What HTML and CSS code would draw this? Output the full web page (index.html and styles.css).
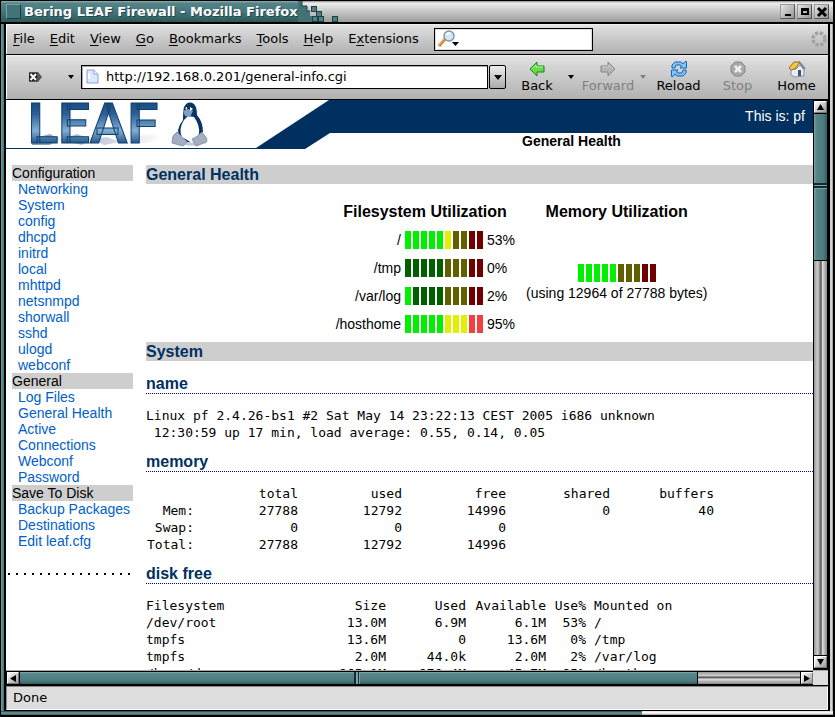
FILE: index.html
```html
<!DOCTYPE html>
<html lang="en">
<head>
<meta charset="utf-8">
<title>Bering LEAF Firewall - Mozilla Firefox</title>
<link rel="stylesheet" href="styles.css">
</head>
<body>
<div class="window">
  <div class="titlebar">
    <div class="title-tab"><span class="sysbox"></span><span class="title">Bering LEAF Firewall - Mozilla Firefox</span></div>
    <svg class="ragged" width="44" height="21" viewBox="0 0 44 21" aria-hidden="true">
      <path d="M0 0H4V5H9V10H12V15H17V21H0Z" fill="#427276"/>
      <path d="M4 0V5H9V10H12" fill="none" stroke="#203f43"/>
      <g fill="#4d8185" stroke="#203f43">
        <rect x="13.500" y="5.500" width="5" height="5"/><rect x="18.500" y="10.500" width="5" height="5"/>
        <rect x="14.500" y="15.500" width="5" height="5"/><rect x="20.500" y="15.500" width="5" height="5"/><rect x="34.500" y="15.500" width="5" height="5"/>
      </g>
    </svg>
    <div class="win-buttons">
      <button aria-label="Minimize"><svg width="12" height="12" viewBox="0 0 12 12"><path d="M3 8H9V10H3Z"/></svg></button>
      <button aria-label="Maximize"><svg width="12" height="12" viewBox="0 0 12 12"><path fill-rule="evenodd" d="M2 2H10V9H2ZM4 5V7H8V5Z"/></svg></button>
      <button aria-label="Close"><svg width="12" height="12" viewBox="0 0 12 12"><path d="M2 2L10 10M10 2L2 10" stroke="#000" stroke-width="3"/></svg></button>
    </div>
  </div>
  <div class="frame">
    <div class="inside">
      <div class="menubar">
        <nav class="menus">
          <button><u>F</u>ile</button><button><u>E</u>dit</button><button><u>V</u>iew</button><button><u>G</u>o</button><button><u>B</u>ookmarks</button><button><u>T</u>ools</button><button><u>H</u>elp</button><button>E<u>x</u>tensions</button>
        </nav>
        <div class="search">
          <svg width="22" height="18" viewBox="0 0 22 18" aria-hidden="true">
            <path d="M1 16L7 9" stroke="#d77f2a" stroke-width="3"/><path d="M1 15L6 9" stroke="#ffc27a"/>
            <circle cx="11" cy="6" r="5" fill="#cfe8fa" stroke="#8793a5" stroke-width="1.500"/>
            <path d="M8 5Q9 3 12 3" stroke="#fff" stroke-width="2" fill="none"/>
            <path d="M14 12H21L17.500 16Z"/>
          </svg>
          <input type="text" aria-label="Search">
        </div>
        <svg class="throbber" width="16" height="16" viewBox="0 0 16 16" aria-hidden="true">
          <circle cx="8" cy="8" r="6" fill="none" stroke="#a2a2a2" stroke-width="3.500" stroke-dasharray="3.200 1.512"/>
        </svg>
      </div>
      <div class="toolbar">
        <button class="go" aria-label="Clear location"><svg width="14" height="10" viewBox="0 0 14 10"><path d="M0 0H9L13 5L9 10H0Z" fill="#555"/><path d="M0 1H8V9H0Z" fill="#222"/><path d="M1.500 2L7 8M7 2L1.500 8" stroke="#fff" stroke-width="2"/></svg></button>
        <button class="caret first" aria-label="Location options"><svg width="6" height="4" viewBox="0 0 6 4"><path d="M0 0H6L3 4Z"/></svg></button>
        <div class="address">
          <svg width="13" height="16" viewBox="0 0 13 16" aria-hidden="true"><path d="M1 1H8L12 5V14H1Z" fill="#dbe8fb" stroke="#88a0d8"/><path d="M8 1V5H12" fill="#fff" stroke="#88a0d8"/><path d="M3 4V10" stroke="#fff" stroke-width="2"/></svg>
          <input type="text" aria-label="Address" value="http://192.168.0.201/general-info.cgi">
        </div>
        <button class="drop" aria-label="History"><svg width="8" height="5" viewBox="0 0 8 5"><path d="M0 0H8L4 5Z"/></svg></button>
        <button class="tool back"><svg width="18" height="18" viewBox="0 0 18 18"><path d="M2 9L9 2V6H16V12H9V16Z" fill="#68d84f" stroke="#178a16"/><path d="M4 9L8 5V7H15" fill="none" stroke="#b9f5a5"/></svg>Back</button>
        <button class="caret back-caret" aria-label="Back list"><svg width="6" height="4" viewBox="0 0 6 4"><path d="M0 0H6L3 4Z"/></svg></button>
        <button class="tool forward" disabled><svg width="18" height="18" viewBox="0 0 18 18"><path d="M16 9L9 2V6H2V12H9V16Z" fill="#b5b5b5" stroke="#868686"/><path d="M3 7H10V5L14 9" fill="none" stroke="#ccc"/></svg>Forward</button>
        <button class="caret forward-caret" aria-label="Forward list" disabled><svg width="6" height="4" viewBox="0 0 6 4"><path d="M0 0H6L3 4Z" fill="#808080"/></svg></button>
        <button class="tool"><svg width="18" height="18" viewBox="0 0 18 18"><g fill="#7fc6fb" stroke="#1763bd"><path d="M2 8V5L5 2H11L13 4L15 1.500H16.500V8H10L11.500 6L10 5H6L5 8Z"/><path d="M16 10V13L13 16H7L5 14L3 16.500H1.500V10H8L6.500 12L8 13H12L13 10Z"/></g></svg>Reload</button>
        <button class="tool" disabled><svg width="18" height="18" viewBox="0 0 18 18"><path d="M6 2H12L16 6V12L12 16H6L2 12V6Z" fill="#aaa" stroke="#858585"/><path d="M6 6L12 12M12 6L6 12" stroke="#f0f0f0" stroke-width="2.500"/></svg>Stop</button>
        <button class="tool"><svg width="18" height="18" viewBox="0 0 18 18"><path d="M3 9H8L12 5L16 10V16L7 17L3 15Z" fill="#e8edf5" stroke="#8591a5"/><path d="M1 8L6 2H12L7 9L3 10Z" fill="#f5c745" stroke="#9a6b10"/><path d="M11 2L17 9" stroke="#7e8490" stroke-width="2"/><path d="M10 10H13V16H10Z" fill="#44566f"/></svg>Home</button>
      </div>
      <div class="viewport">
        <div class="page">
          <header class="banner">
            <svg class="logo" width="324" height="49" viewBox="6 100 324 49" role="img" aria-label="LEAF">
              <defs><linearGradient id="steel" x1="0" y1="0" x2="0" y2="1"><stop offset="0" stop-color="#063a6c"/><stop offset=".35" stop-color="#2c6095"/><stop offset=".6" stop-color="#83aed4"/><stop offset=".78" stop-color="#285b8f"/><stop offset="1" stop-color="#043664"/></linearGradient>
              <linearGradient id="shade"><stop offset="0" stop-color="#8797b4"/><stop offset="1" stop-color="#fff"/></linearGradient></defs>
              <path d="M31 139L50 134L59 139L50 145H32ZM60 140L77 134L91 139L82 145ZM92 139L107 137L121 142L104 145ZM132 138L151 134L163 137L148 143H134Z" fill="url(#shade)"/>
              <text class="leaf" x="28" y="143">LEAF</text>
              <path d="M177 143Q193 149 208 142L202 136H180Z" fill="#c3cad8"/>
              <path d="M180 138Q175 130 183 120Q183 111 184 107Q188 100 194 104Q197 107 197 115Q203 122 203 132L199 142H183Z" fill="#063563"/>
              <path d="M184 120L188 116L194 117Q200 125 199 134L192 143L182 137Q178 130 184 120Z" fill="#fff"/>
              <path d="M183 111L188 109L193 111L190 117L185 116Z" fill="#7aa0c5"/>
              <path d="M185 108L187 107V110ZM190 107L193 109L190 111Z" fill="#fff"/>
              <path d="M173 136L177 132L182 137L187 142L183 146L172 143ZM192 139L198 136L202 132L207 139L206 142L196 146Z" fill="#a4aec0" stroke="#8895ae"/>
              <path d="M6 148H256L329 100H330V133L305 149H6Z" fill="#003060"/>
            </svg>
            <div class="banner-text"><div class="host">This is: pf</div><div class="crumb">General Health</div></div>
          </header>
          <div class="columns">
            <nav class="side">
              <h4>Configuration</h4>
              <a href="#">Networking</a><a href="#">System</a><a href="#">config</a><a href="#">dhcpd</a><a href="#">initrd</a><a href="#">local</a><a href="#">mhttpd</a><a href="#">netsnmpd</a><a href="#">shorwall</a><a href="#">sshd</a><a href="#">ulogd</a><a href="#">webconf</a>
              <h4>General</h4>
              <a href="#">Log Files</a><a href="#">General Health</a><a href="#">Active</a><a href="#">Connections</a><a href="#">Webconf</a><a href="#">Password</a>
              <h4>Save To Disk</h4>
              <a href="#">Backup Packages</a><a href="#">Destinations</a><a href="#">Edit leaf.cfg</a>
              <hr>
            </nav>
            <main>
              <h2>General Health</h2>
              <div class="usage">
                <table class="fs">
                  <caption>Filesystem Utilization</caption>
                  <tr><th scope="row">/</th><td><span class="bar"><i class="g"></i><i class="g"></i><i class="g"></i><i class="g"></i><i class="g"></i><i class="y"></i><i class="dy"></i><i class="dy"></i><i class="dr"></i><i class="dr"></i></span></td><td>53%</td></tr>
                  <tr><th scope="row">/tmp</th><td><span class="bar"><i class="dg"></i><i class="dg"></i><i class="dg"></i><i class="dg"></i><i class="dg"></i><i class="dy"></i><i class="dy"></i><i class="dy"></i><i class="dr"></i><i class="dr"></i></span></td><td>0%</td></tr>
                  <tr><th scope="row">/var/log</th><td><span class="bar"><i class="g"></i><i class="dg"></i><i class="dg"></i><i class="dg"></i><i class="dg"></i><i class="dy"></i><i class="dy"></i><i class="dy"></i><i class="dr"></i><i class="dr"></i></span></td><td>2%</td></tr>
                  <tr><th scope="row">/hosthome</th><td><span class="bar"><i class="g"></i><i class="g"></i><i class="g"></i><i class="g"></i><i class="g"></i><i class="y"></i><i class="y"></i><i class="y"></i><i class="r"></i><i class="r"></i></span></td><td>95%</td></tr>
                </table>
                <section class="mem">
                  <h5>Memory Utilization</h5>
                  <div class="mem-body"><span class="bar"><i class="g"></i><i class="g"></i><i class="g"></i><i class="g"></i><i class="g"></i><i class="dy"></i><i class="dy"></i><i class="dy"></i><i class="dr"></i><i class="dr"></i></span><span>(using 12964 of 27788 bytes)</span></div>
                </section>
              </div>
              <h2>System</h2>
              <h3>name</h3>
              <pre>Linux pf 2.4.26-bs1 #2 Sat May 14 23:22:13 CEST 2005 i686 unknown
 12:30:59 up 17 min, load average: 0.55, 0.14, 0.05</pre>
              <h3>memory</h3>
              <table class="report memory">
                <tr><td></td><th>total</th><th>used</th><th>free</th><th>shared</th><th>buffers</th></tr>
                <tr><th>Mem:</th><td>27788</td><td>12792</td><td>14996</td><td>0</td><td>40</td></tr>
                <tr><th>Swap:</th><td>0</td><td>0</td><td>0</td><td></td><td></td></tr>
                <tr><th>Total:</th><td>27788</td><td>12792</td><td>14996</td><td></td><td></td></tr>
              </table>
              <h3>disk free</h3>
              <table class="report disk">
                <tr><th>Filesystem</th><th>Size</th><th>Used</th><th>Available</th><th>Use%</th><th>Mounted on</th></tr>
                <tr><td>/dev/root</td><td>13.0M</td><td>6.9M</td><td>6.1M</td><td>53%</td><td>/</td></tr>
                <tr><td>tmpfs</td><td>13.6M</td><td>0</td><td>13.6M</td><td>0%</td><td>/tmp</td></tr>
                <tr><td>tmpfs</td><td>2.0M</td><td>44.0k</td><td>2.0M</td><td>2%</td><td>/var/log</td></tr>
                <tr><td>/home/danes</td><td>965.1M</td><td>870.4M</td><td>45.7M</td><td>95%</td><td>/hosthome</td></tr>
              </table>
            </main>
          </div>
        </div>
        <div class="vscroll">
          <button aria-label="Scroll up"><svg width="7" height="6" viewBox="0 0 7 6"><path d="M0 6L3.500 0L7 6Z"/></svg></button>
          <div class="thumb"></div><div class="trough"></div>
          <button aria-label="Scroll down"><svg width="7" height="6" viewBox="0 0 7 6"><path d="M0 0L3.500 6L7 0Z"/></svg></button>
        </div>
      </div>
      <div class="hscroll">
        <button aria-label="Scroll left"><svg width="6" height="7" viewBox="0 0 6 7"><path d="M6 0L0 3.500L6 7Z"/></svg></button>
        <div class="thumb"></div><div class="trough"></div>
        <button aria-label="Scroll right"><svg width="6" height="7" viewBox="0 0 6 7"><path d="M0 0L6 3.500L0 7Z"/></svg></button>
      </div>
      <div class="status">Done</div>
    </div>
  </div>
  <div class="bottom-edge"><span></span></div>
</div>
</body>
</html>
```
FILE: styles.css
```css
* { box-sizing: border-box; }
body { margin: 0; background: #000; color: #000; font: 13px/16px "DejaVu Sans", sans-serif; }
button { margin: 0; padding: 0; border: 0; background: none; color: inherit; font: inherit; }
svg { display: block; flex: none; }
.window { height: 100vh; padding: 1px 2px 2px 1px; display: flex; flex-direction: column; overflow: hidden; }

.titlebar { height: 21px; flex: none; display: flex; background: linear-gradient(#8a8a8a, #eee 2px, #cfcfcf 40%, #9d9d9d); }
.title-tab { display: flex; align-items: center; gap: 3px; padding-left: 5px; background: linear-gradient(#8fb0b3, #568589 2px, #44767a 50%, #2d585c); }
.sysbox { width: 15px; height: 15px; background: #417377; border: 1px solid #1c3b3e; border-top-color: #75a1a4; border-left-color: #75a1a4; }
.title { color: #fff; font-weight: bold; text-shadow: 1px 1px #24474a; white-space: nowrap; }
.ragged { margin-right: auto; }
.win-buttons { display: flex; gap: 2px; padding: 3px 4px 0 0; }
.win-buttons button { width: 15px; height: 15px; display: grid; place-items: center; background: linear-gradient(135deg, #e4e4e4, #959595); border: 1px solid #555; border-top-color: #999; border-left-color: #999; }

.frame { flex: 1; min-height: 0; display: flex; padding: 2px 0 0 3px; background: linear-gradient(#000, #000) top / 100% 2px no-repeat, linear-gradient(90deg, #6d9b9e, #437578 3px, transparent 3px), linear-gradient(270deg, #8a8a8a, #eee 2px, #aaa 3px, #000 3px); }
.inside { flex: 1; min-width: 0; margin-right: 3px; padding: 0 2px; background: #000; display: flex; flex-direction: column; }
.menubar, .toolbar { flex: none; display: flex; align-items: center; background: linear-gradient(#f4f4f4, #e0e0e0 2px, #c9c9c9 50%, #b1b1b1); border-left: 1px solid #fff; }
.menubar { height: 30px; }
.menus { display: flex; gap: 15px; padding: 0 15px 0 6px; }
.menus u { text-underline-offset: 2px; }
.search { width: 159px; height: 23px; display: flex; align-items: center; padding-left: 3px; background: #fff; border: 1px solid #000; outline: 1px solid #ddd; outline-offset: -2px; }
input { min-width: 0; flex: 1; border: 0; padding: 0; background: none; font: inherit; outline: none; }
.throbber { margin-left: auto; margin-right: 1px; }
.toolbar { height: 44px; margin-top: 1px; padding-right: 2px; }
.go { width: 50px; display: flex; justify-content: center; padding-left: 8px; }
.caret { display: grid; place-items: center; }
.caret.first { width: 24px; padding-left: 4px; padding-right: 1px; }
.address { flex: 1; min-width: 0; height: 24px; display: flex; align-items: center; gap: 7px; padding-left: 4px; background: #fff; border: 1px solid #000; box-shadow: inset 1px 1px #aaa; }
.drop { width: 17px; height: 24px; margin: 0 6px 0 1px; display: grid; place-items: center; border: 1px solid #000; background: linear-gradient(#eee, #aaa); border-radius: 2px; }
.tool { width: 59px; height: 34px; display: flex; flex-direction: column; align-items: center; }
.tool:disabled { color: #808080; }
.tool.back { width: 50px; }
.tool.forward { width: 56px; }
.back-caret { width: 18px; }
.forward-caret { width: 13px; }

.viewport { flex: 1; min-height: 0; margin-top: 1px; display: flex; background: #fff; }
.page { flex: 1; min-width: 0; overflow: hidden; font: 14px/16px "Liberation Sans", sans-serif; }
.banner { display: flex; height: 49px; }
.leaf { font: bold 56px Roboto, sans-serif; fill: url(#steel); stroke: #0d406f; stroke-width: 1px; }
.banner-text { flex: 1; }
.host { height: 33px; padding: 8px 8px 0; text-align: right; color: #fff; background: #003060; }
.crumb { text-align: center; font-weight: bold; }
.columns { display: flex; gap: 13px; padding: 16px 0 0 6px; }
.side { width: 121px; flex: none; }
.side h4 { margin: 0; background: #cecece; font-weight: normal; }
.side a { display: block; padding-left: 6px; color: #0060c8; text-decoration: none; }
.side hr { height: 2px; margin: 24px 0 0 -4px; border: 0; background: repeating-linear-gradient(90deg, #000 0 2px, transparent 2px 8px); }
main { flex: 1; min-width: 0; }
h2, h3, h5, caption { font-size: 16px; font-weight: bold; }
h2 { margin: 0; line-height: 19px; color: #003060; background: #cecece; }
h3 { margin: 12px 0 13px; line-height: 18px; color: #003060; border-bottom: 1px dotted #0000a0; }
h2 + h3 { margin-top: 14px; }
.usage { display: flex; gap: 11px; padding: 13px 0 4px 189px; }
.fs { border-collapse: collapse; }
.fs caption, .mem h5 { margin: 0; height: 29px; line-height: 29px; white-space: nowrap; }
.fs th, .fs td { height: 28px; padding: 0 4px 0 0; font-weight: normal; }
.fs th { width: 70px; text-align: right; }
.fs td:last-child { width: 28px; padding: 0; }
.bar { display: flex; gap: 2px; }
.bar i { width: 6px; height: 18px; }
.g { background: #00f000; } .dg { background: #006000; } .y { background: #e0f000; } .dy { background: #606000; } .r { background: #f04040; } .dr { background: #700000; }
.mem { display: flex; flex-direction: column; text-align: center; }
.mem-body { flex: 1; display: flex; flex-direction: column; align-items: center; justify-content: center; gap: 3px; white-space: nowrap; }
pre { margin: 0; font: 13px/17px "DejaVu Sans Mono", monospace; }
.report { border-collapse: collapse; table-layout: fixed; font: 13px/17px "DejaVu Sans Mono", monospace; }
.report th, .report td { height: 17px; padding: 0; font-weight: normal; text-align: right; white-space: nowrap; }
.memory { width: 568px; }
.memory td:first-child, .memory th:first-child { width: 48px; }
.disk { width: 568px; }
.disk th:nth-child(1) { width: 160px; }
.disk th:nth-child(5) { width: 40px; }
.disk th:nth-child(2), .disk th:nth-child(3), .disk th:nth-child(4) { width: 80px; }
.disk tr > :first-child { text-align: left; }
.disk tr > :last-child { text-align: left; padding-left: 8px; }

.vscroll { width: 15px; flex: none; display: flex; flex-direction: column; padding: 1px 1px 2px; background: #000; }
.vscroll button, .hscroll button { flex: none; display: grid; place-items: center; background: linear-gradient(135deg, #fff, #999); border: 1px solid #777; border-top-color: #fff; border-left-color: #fff; }
.vscroll button { height: 12px; }
.vscroll .thumb { flex: 147; margin-top: 1px; background: linear-gradient(transparent calc(50% - 4px), #142c2e 0 calc(50% - 2px), #7aa3a5 0 calc(50% - 1px), #142c2e 0 calc(50% + 1px), #7aa3a5 0 calc(50% + 2px), transparent 0), linear-gradient(90deg, #7fa9ab, #568688 2px, #4d7d80 70%, #355f62); }
.vscroll .trough { flex: 395; margin: 1px 0; background: linear-gradient(90deg, #999, #ccc 30%, #555 55%, #ddd 65%, #888); }
.hscroll { height: 15px; flex: none; display: flex; padding: 1px 15px 1px 1px; background: linear-gradient(#000, #000) left / calc(100% - 15px) 100% no-repeat, #ddd; border-top: 1px solid #aaa; }
.hscroll button { width: 12px; }
.hscroll .thumb { flex: 678; margin-left: 1px; background: linear-gradient(90deg, transparent calc(50% - 4px), #142c2e 0 calc(50% - 2px), #7aa3a5 0 calc(50% - 1px), #142c2e 0 calc(50% + 1px), #7aa3a5 0 calc(50% + 2px), transparent 0), linear-gradient(#7fa9ab, #568688 2px, #4d7d80 70%, #355f62); }
.hscroll .trough { flex: 102; margin: 0 1px; background: linear-gradient(#999, #ccc 30%, #555 45%, #ddd 60%, #888); }
.status { flex: none; height: 24px; margin: 1px 0; padding: 3px 6px; background: #ddd; border: 1px solid #888; border-right-color: #fff; border-bottom-color: #fff; }
.bottom-edge { height: 4px; flex: none; background: linear-gradient(#ddd, #fff 2px, #999); }
.bottom-edge span { display: block; width: 77%; height: 100%; background: linear-gradient(#203f43, #6d9b9e 2px, #355f62); }
```
